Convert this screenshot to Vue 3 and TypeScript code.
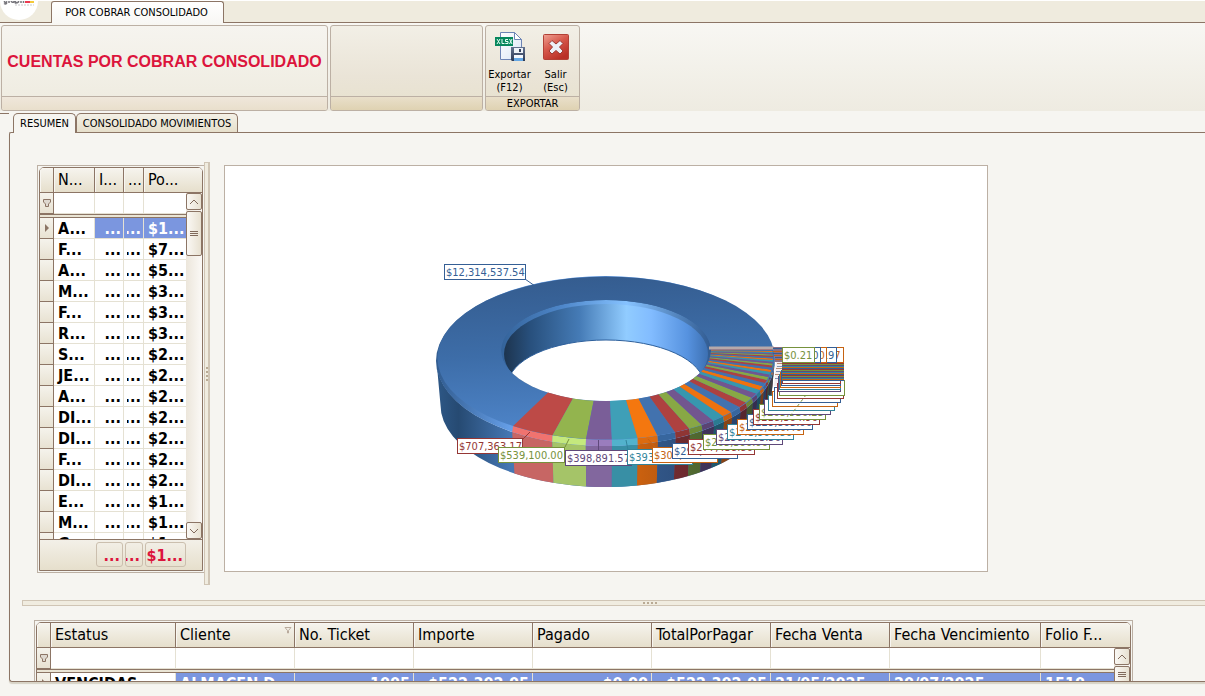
<script setup lang="ts">
import { ref } from 'vue'

interface Column { title: string; width: number; right?: boolean; filter?: boolean }
interface Slice { top: string; bevel: string; wall: string; tone: Tone }
interface Tone { top: string; bevel: string; wall: string; line: string }
interface Label { x: number; y: number; w: number; text: string; color: string }

const activeTab = ref('resumen')

const balanceColumns: Column[] = [
  { title: 'N...', width: 41 },
  { title: 'I...', width: 29, right: true },
  { title: '...', width: 20, right: true },
  { title: 'Po...', width: 43 },
]
const balanceRows: [string, string][] = [
  ['A...', '$1...'], ['F...', '$7...'], ['A...', '$5...'], ['M...', '$3...'],
  ['F...', '$3...'], ['R...', '$3...'], ['S...', '$2...'], ['JE...', '$2...'],
  ['A...', '$2...'], ['DI...', '$2...'], ['DI...', '$2...'], ['F...', '$2...'],
  ['DI...', '$2...'], ['E...', '$1...'], ['M...', '$1...'], ['G...', '$1...'],
]

const ticketColumns: Column[] = [
  { title: 'Estatus', width: 125 },
  { title: 'Cliente', width: 119, filter: true },
  { title: 'No. Ticket', width: 119, right: true },
  { title: 'Importe', width: 119, right: true },
  { title: 'Pagado', width: 119, right: true },
  { title: 'TotalPorPagar', width: 119, right: true },
  { title: 'Fecha Venta', width: 119 },
  { title: 'Fecha Vencimiento', width: 151 },
  { title: 'Folio F...', width: 75 },
]
const ticket = ['VENCIDAS', 'ALMACEN D...', '1005', '$522,302.05', '$0.00', '$522,302.05', '21/05/2025', '20/07/2025', '1510']

const tones: Tone[] = [
  { top: '#4272ae', bevel: '#37669e', wall: '#33598c', line: '#355f95' },
  { top: '#ae4140', bevel: '#8f3534', wall: '#7d2d2f', line: '#953735' },
  { top: '#88a845', bevel: '#6d8a37', wall: '#5f7a31', line: '#76923c' },
  { top: '#72568f', bevel: '#5a4373', wall: '#4d3a66', line: '#5f497a' },
  { top: '#3797ae', bevel: '#2b7b90', wall: '#256c80', line: '#31849b' },
  { top: '#ee720f', bevel: '#c75e0e', wall: '#b9560d', line: '#c66312' },
]
const frontTones: Tone[] = [
  { top: '#bd4a47', bevel: '#f0736f', wall: '#c76664', line: '#953735' },
  { top: '#93b44e', bevel: '#c4e97d', wall: '#a5c468', line: '#76923c' },
  { top: '#7a5e98', bevel: '#9a7dbd', wall: '#82679e', line: '#5f497a' },
  { top: '#3f9fb7', bevel: '#52b2cc', wall: '#388fa5', line: '#31849b' },
  { top: '#f4770f', bevel: '#dc6b10', wall: '#c9600f', line: '#c66312' },
]

const angles = [123.5, 108.4, 96.7, 87.8, 79, 71.9, 65.5, 60, 55, 50, 45.5, 41.5, 37.5, 34, 30.5, 27.5, 25,
  22.5, 20.2, 18.2, 16.4, 14.7, 13.1, 11.6, 10.2, 8.9, 7.7, 6.6, 5.5, 4.5, 3.6, 2.7, 1.9, 1.1, 0.4, -0.3, -1, -1.6, -2.2, -2.8]

function point(cx: number, cy: number, rx: number, ry: number, degrees: number): string {
  const t = (degrees * Math.PI) / 180
  return `${(cx + rx * Math.cos(t)).toFixed(1)} ${(cy + ry * Math.sin(t)).toFixed(1)}`
}
const rimAngle = (a: number) => a - 5 * Math.max(0, 1 - (a + 3) / 45)
const inner = (a: number) => point(606, 350.5, 105, 50.5, a)
const rim = (a: number) => point(605.5, 358, 167.5, 81.5, rimAngle(a))
const edge = (a: number) => point(605.5, 361, 169, 85, rimAngle(a))
const base = (a: number) => point(605.5, 405, 165, 82, rimAngle(a))

const slices: Slice[] = angles.slice(0, -1).map((a, i) => {
  const b = angles[i + 1]
  return {
    top: `M${inner(a)} L${rim(a)} A167.5 81.5 0 0 0 ${rim(b)} L${inner(b)} A105 50.5 0 0 1 ${inner(a)} Z`,
    bevel: `M${rim(a)} L${edge(a)} A169 85 0 0 0 ${edge(b)} L${rim(b)} A167.5 81.5 0 0 1 ${rim(a)} Z`,
    wall: `M${edge(a)} L${base(a)} A165 82 0 0 0 ${base(b)} L${edge(b)} A169 85 0 0 1 ${edge(a)} Z`,
    tone: i < 5 ? frontTones[i] : tones[(i + 1) % 6],
  }
})

const placed: [number, number, number, string][] = [
  [444, 264, 82, '$12,314,537.54'], [457, 438, 66, '$707,363.17'], [498, 447, 67, '$539,100.00'],
  [565, 450, 67, '$398,891.57'], [627, 449, 66, '$393,205.80'], [652, 447, 66, '$304,182.14'],
  [672, 443, 66, '$291,640.35'], [688, 439, 67, '$277,438.80'], [703, 434, 67, '$265,300.00'],
  [716, 429, 67, '$258,703.50'], [727, 424, 67, '$243,900.86'], [737, 419, 67, '$236,120.40'],
  [747, 414, 66, '$229,805.06'], [753, 409, 67, '$218,364.90'], [759, 404, 67, '$205,930.25'],
  [764, 399, 67, ''], [768, 395, 67, ''], [772, 391, 66, ''],
  [774, 387, 67, ''], [777, 383, 67, ''], [779, 380, 66, ''],
]
const labels: Label[] = placed.map(([x, y, w, text], i) => ({ x, y, w, text, color: tones[i % 6].line }))
for (let i = 0; i < 5; i++) {
  labels.push({ x: 778 + i, y: 376 - i * 2, w: 63 - i, text: '', color: tones[(i + 3) % 6].line })
}
for (let i = 0; i < 18; i++) {
  labels.push({ x: 782, y: 365 - i, w: 62, text: '', color: tones[i * 5 % 6].line })
}
const lastLabels: Label[] = [
  { x: 782, y: 347, w: 62, text: '$12,304.97', color: tones[5].line },
  { x: 782, y: 347, w: 55, text: '$1,803.19', color: tones[0].line },
  { x: 782, y: 347, w: 45, text: '$100.00', color: tones[5].line },
  { x: 782, y: 347, w: 39, text: '$10.00', color: tones[0].line },
  { x: 782, y: 347, w: 33, text: '$0.21', color: tones[2].line },
]
labels.push(...lastLabels)
</script>

<template>
  <div class="window">
    <header class="doc-bar">
      <svg class="logo" viewBox="0 0 40 22" role="img" aria-label="Logo">
        <circle cx="19" cy="0" r="19" fill="#fff" />
        <path d="M4.500 0v1q1 1 2 0v1.500q-1 1-2.500 0M9 0v2M11 0q1 2 3 1V0M15.500 0v2q2 0 3-1V0M21 0v2M23.500 0v2" fill="none" stroke="#77767c" stroke-width="1.500" />
        <path d="M25 0h5v2h-5z" fill="#ec3a50" /><path d="M30 0h4v2h-4z" fill="#f4c93a" />
        <path d="M15 4h19" stroke="#c9c9cc" stroke-dasharray="2 1" />
      </svg>
      <button class="doc-tab" type="button">POR COBRAR CONSOLIDADO</button>
    </header>

    <section class="ribbon">
      <div class="group group-title">
        <div class="group-body"><h1>CUENTAS POR COBRAR CONSOLIDADO</h1></div>
        <div class="group-caption"></div>
      </div>
      <div class="group group-blank tinted">
        <div class="group-body"></div>
        <div class="group-caption"></div>
      </div>
      <div class="group group-export tinted">
        <div class="group-body">
          <button class="tool" type="button">
            <svg viewBox="0 0 32 32" aria-hidden="true">
              <defs>
                <linearGradient id="paper" x2="1" y2="1"><stop stop-color="#fff" /><stop offset="1" stop-color="#dbe6f5" /></linearGradient>
                <linearGradient id="disk" y2="1" x2="0"><stop stop-color="#64738f" /><stop offset="1" stop-color="#2d3955" /></linearGradient>
              </defs>
              <path d="M6.500 1.500h14l7 7v20h-21z" fill="url(#paper)" stroke="#6d84b5" />
              <path d="M20.500 1.500v7h7z" fill="#fff" stroke="#6d84b5" />
              <path d="M1 6h18v9H1z" fill="#07875d" />
              <path d="M3 8l3 5M6 8l-3 5M8 8v4.500h2.500M14 8.500h-2.500v2H14v2h-2.700M15.500 8l2.500 5M18 8l-2.500 5" fill="none" stroke="#e5fff5" />
              <path d="M17 16h14v14H18l-1-1z" fill="url(#disk)" />
              <path d="M20 17h9v5h-9z" fill="#eef2f8" /><path d="M25 18h2v3h-2z" fill="#35415d" />
              <path d="M20 24h9v6h-9z" fill="#f4f8ff" /><path d="M20 27h9v3h-9z" fill="#66a8e5" />
            </svg>
            <span>Exportar<br />(F12)</span>
          </button>
          <button class="tool" type="button">
            <svg viewBox="0 0 32 32" aria-hidden="true">
              <defs><linearGradient id="close" x2="0.600" y2="1"><stop stop-color="#f0a293" /><stop offset="0.500" stop-color="#d6584b" /><stop offset="1" stop-color="#b92f26" /></linearGradient></defs>
              <rect x="3.500" y="3.500" width="25" height="25" rx="1" fill="url(#close)" stroke="#b24136" />
              <path d="M12 9.500l4 3.500 4-3.500 3 3-3.500 3.500 3.500 4-3 3-4-3.500-4 3.500-3-3 3.500-4-3.500-3.500z" fill="#edf0f7" stroke="#9b3731" stroke-linejoin="round" />
            </svg>
            <span>Salir<br />(Esc)</span>
          </button>
        </div>
        <div class="group-caption">EXPORTAR</div>
      </div>
    </section>

    <nav class="tabs" role="tablist">
      <button type="button" role="tab" :class="['tab', { active: activeTab === 'resumen' }]" @click="activeTab = 'resumen'">RESUMEN</button>
      <button type="button" role="tab" :class="['tab', { active: activeTab === 'movimientos' }]" @click="activeTab = 'movimientos'">CONSOLIDADO MOVIMIENTOS</button>
    </nav>

    <main class="panel">
      <div class="upper">
        <section class="grid-frame balance">
          <div class="grid">
            <div class="grid-main">
              <div class="table-clip">
                <table>
                  <colgroup><col class="mark-col" /><col v-for="(c, i) in balanceColumns" :key="i" :style="{ width: c.width + 'px' }" /></colgroup>
                  <thead>
                    <tr class="head"><th></th><th v-for="(c, i) in balanceColumns" :key="i">{{ c.title }}</th></tr>
                    <tr class="filter">
                      <td class="mark"><svg viewBox="0 0 8 8" aria-hidden="true"><path d="M.5.5h7v2.500L5.500 5v2.500h-3V5l-2-2z" /></svg></td>
                      <td v-for="(c, i) in balanceColumns" :key="i"><input type="text" :aria-label="'Filtro ' + c.title" /></td>
                    </tr>
                    <tr class="divider"><td :colspan="balanceColumns.length + 1"></td></tr>
                  </thead>
                  <tbody>
                    <tr v-for="(r, i) in balanceRows" :key="i" :class="{ selected: i === 0 }">
                      <td class="mark"><svg v-if="i === 0" class="arrow" viewBox="0 0 8 8" aria-hidden="true"><path d="M2 0l4 4-4 4z" /></svg></td>
                      <td class="first">{{ r[0] }}</td>
                      <td class="number"><span class="end">...</span></td>
                      <td class="number"><span class="end">...</span></td>
                      <td>{{ r[1] }}</td>
                    </tr>
                  </tbody>
                </table>
              </div>
              <div class="scroll">
                <div class="corner"></div>
                <button type="button" class="step" aria-label="Subir"><svg viewBox="0 0 8 8"><path d="M0 6l4-4 4 4" /></svg></button>
                <button type="button" class="thumb" aria-label="Desplazar"><svg viewBox="0 0 8 8"><path d="M0 1.500h8M0 3.500h8M0 5.500h8" /></svg></button>
                <div class="track"></div>
                <button type="button" class="step" aria-label="Bajar"><svg viewBox="0 0 8 8"><path d="M0 2l4 4 4-4" /></svg></button>
              </div>
            </div>
            <footer class="totals">
              <output class="t-one">...</output><output class="t-two">...</output><output class="t-three">$1...</output>
            </footer>
          </div>
        </section>
        <div class="splitter-v"><i v-for="n in 4" :key="n"></i></div>
        <figure class="chart">
          <svg viewBox="225 166 762 405" role="img" aria-label="Saldos por cliente">
            <defs>
              <linearGradient id="ring" x2="0.100" y2="1"><stop stop-color="#345b8d" /><stop offset="0.500" stop-color="#3d6da8" /><stop offset="1" stop-color="#4f86cb" /></linearGradient>
              <linearGradient id="side" gradientUnits="userSpaceOnUse" x1="436" y1="0" x2="511" y2="0"><stop stop-color="#2e5887" /><stop offset="0.300" stop-color="#264a72" /><stop offset="1" stop-color="#4677b4" /></linearGradient>
              <linearGradient id="rim" gradientUnits="userSpaceOnUse" x1="436" y1="0" x2="511" y2="0"><stop stop-color="#315c90" /><stop offset="1" stop-color="#669fe8" /></linearGradient>
              <linearGradient id="hole"><stop stop-color="#1d344e" /><stop offset="0.130" stop-color="#28507d" /><stop offset="0.370" stop-color="#457bb6" /><stop offset="0.600" stop-color="#91ccff" /><stop offset="0.720" stop-color="#82bcff" /><stop offset="0.900" stop-color="#5692df" /><stop offset="1" stop-color="#3d70b2" /></linearGradient>
              <linearGradient id="lip"><stop stop-color="#34639a" /><stop offset="0.300" stop-color="#4f88cb" /><stop offset="0.600" stop-color="#86c2ff" /><stop offset="1" stop-color="#315b91" /></linearGradient>
              <linearGradient id="dusk" gradientUnits="userSpaceOnUse" x1="640" y1="0" x2="775" y2="0"><stop stop-color="#10182a" stop-opacity="0" /><stop offset="1" stop-color="#10182a" stop-opacity="0.450" /></linearGradient>
              <clipPath id="opening"><ellipse cx="606" cy="350.500" rx="105" ry="50.500" /></clipPath>
            </defs>
            <path d="M436.500 361A169 85 0 0 0 774.500 361L770.500 405A165 82 0 0 1 440.500 405Z" fill="url(#side)" />
            <path v-for="(s, i) in slices" :key="'w' + i" :d="s.wall" :fill="s.tone.wall" />
            <path d="M640 443A169 85 0 0 0 774.500 361L770.500 405A165 82 0 0 1 640 485.500Z" fill="url(#dusk)" />
            <ellipse cx="605.500" cy="361" rx="169.500" ry="85" fill="url(#rim)" />
            <path v-for="(s, i) in slices" :key="'b' + i" :d="s.bevel" :fill="s.tone.bevel" />
            <ellipse cx="606" cy="358" rx="168.500" ry="81.500" fill="url(#ring)" />
            <g clip-path="url(#opening)">
              <ellipse cx="606" cy="350.500" rx="105" ry="50.500" fill="url(#lip)" />
              <ellipse cx="606" cy="354" rx="102" ry="50" fill="url(#hole)" />
              <ellipse cx="606" cy="385" rx="98" ry="45" fill="#fff" stroke="#2d5f9b" />
            </g>
            <path v-for="(s, i) in slices" :key="'t' + i" :d="s.top" :fill="s.tone.top" />
            <path d="M709 348h65" stroke="#b7a9aa" stroke-width="3" />
            <path d="M525 279l10 7" stroke="#355f95" />
            <path d="M523 439l7-7" stroke="#953735" /><path d="M565 447l4-8" stroke="#76923c" /><path d="M598.500 450v-10" stroke="#5f497a" /><path d="M628 450l-2-10" stroke="#31849b" /><path d="M655 447l-7-8" stroke="#c66312" />
            <path d="M773 347h10v15h-8z" fill="#8a6f86" />
            <path d="M773 351.500h10M774 355.500h9M775 359.500h8" stroke="#c66312" /><path d="M773 348.500h10M773 353.500h10M775 357.500h8" stroke="#355f95" />
            <path d="M776 362h6v14l-4 10h-4z" fill="#f3eef0" />
            <path d="M777 363.500h5M776 368.500h6M775 374.500h6" stroke="#b98b73" /><path d="M777 366.500h5M776 371.500h5M775 378.500h4" stroke="#7f95b5" />
            <g v-for="(l, i) in labels" :key="'l' + i">
              <rect :x="l.x + 0.5" :y="l.y + 0.5" :width="l.w - 1" height="15" fill="#fff" :stroke="l.color" />
              <text v-if="l.text" :x="l.x + 2" :y="l.y + 12" :fill="l.color">{{ l.text }}</text>
            </g>
            <path d="M790 416l16-21" stroke="#76923c" stroke-dasharray="3 3" />
          </svg>
        </figure>
      </div>

      <div class="splitter-h"><i v-for="n in 4" :key="n"></i></div>

      <section class="grid-frame tickets">
        <div class="grid">
          <div class="grid-main">
            <div class="table-clip">
              <table>
                <colgroup><col class="mark-col" /><col v-for="(c, i) in ticketColumns" :key="i" :style="{ width: c.width + 'px' }" /></colgroup>
                <thead>
                  <tr class="head">
                    <th></th>
                    <th v-for="(c, i) in ticketColumns" :key="i">
                      <div class="th">{{ c.title }}<svg v-if="c.filter" viewBox="0 0 8 8" aria-hidden="true"><path d="M1 1.500h6L4.500 4.500V7h-1V4.500z" /></svg></div>
                    </th>
                  </tr>
                  <tr class="filter">
                    <td class="mark"><svg viewBox="0 0 8 8" aria-hidden="true"><path d="M.5.5h7v2.500L5.500 5v2.500h-3V5l-2-2z" /></svg></td>
                    <td v-for="(c, i) in ticketColumns" :key="i"><input type="text" :aria-label="'Filtro ' + c.title" /></td>
                  </tr>
                  <tr class="divider"><td :colspan="ticketColumns.length + 1"></td></tr>
                </thead>
                <tbody>
                  <tr class="selected">
                    <td class="mark"><svg class="arrow" viewBox="0 0 8 8" aria-hidden="true"><path d="M2 0l4 4-4 4z" /></svg></td>
                    <td v-for="(v, i) in ticket" :key="i" :class="{ first: i === 0 }"><span :class="{ end: ticketColumns[i].right }">{{ v }}</span></td>
                  </tr>
                </tbody>
              </table>
            </div>
            <div class="scroll">
              <div class="corner"></div>
              <button type="button" class="step" aria-label="Subir"><svg viewBox="0 0 8 8"><path d="M0 6l4-4 4 4" /></svg></button>
              <button type="button" class="thumb short" aria-label="Desplazar"><svg viewBox="0 0 8 8"><path d="M0 1.500h8M0 3.500h8M0 5.500h8" /></svg></button>
              <div class="track"></div>
            </div>
          </div>
        </div>
      </section>
    </main>
  </div>
</template>

<style>
html, body, #app { height: 100%; }
body { margin: 0; background: #f6f5f1; overflow: hidden; }
</style>

<style scoped>
* { box-sizing: border-box; }
.window {
  --line: #8c7565;
  --soft: #bcb0a4;
  --cell: #e5e1d3;
  display: flex; flex-direction: column; height: 100%; background: #f6f5f1; color: #000;
  font: 11px/13px "DejaVu Sans Condensed", Tahoma, "Noto Sans", sans-serif;
}
button { font: inherit; color: inherit; padding: 0; margin: 0; }
.doc-bar { flex: none; display: flex; align-items: flex-end; height: 23px; border-top: 1px solid #fff; border-bottom: 1px solid var(--line); background: #efebde; }
.logo { width: 40px; height: 22px; margin-right: 11px; align-self: flex-start; flex: none; }
.doc-tab { height: 22px; width: 173px; margin-bottom: -1px; padding-right: 2px; border: 1px solid var(--line); border-bottom: 0; border-radius: 3px 3px 0 0; background: linear-gradient(#fff, #f8f7f4); white-space: nowrap; }
.ribbon { flex: none; display: flex; gap: 2px; height: 88px; padding: 2px 1px 0; background: linear-gradient(#f8f7f3, #eeebe1); }
.group { display: flex; flex-direction: column; border: 1px solid var(--soft); border-radius: 3px; background: linear-gradient(#f6f4ef, #eeebdf); overflow: hidden; }
.group.tinted { background: linear-gradient(#f2efe6, #eae4d7 60%, #e7e1cd); }
.group-title { width: 327px; }
.group-blank { width: 153px; }
.group-export { width: 95px; }
.group-body { flex: 1; display: flex; align-items: center; justify-content: center; padding-top: 2px; }
.group-caption { height: 14px; border-top: 1px solid var(--soft); background: linear-gradient(#efe7db, #e9dfcc); text-align: center; line-height: 13px; }
.tinted .group-caption { background: linear-gradient(#e9dfca, #dfd2b2); }
h1 { margin: 0; font: bold 16px/20px "Liberation Sans", Arial, sans-serif; color: #dc143c; white-space: nowrap; }
.tool { width: 46px; display: flex; flex-direction: column; align-items: center; gap: 5px; border: 0; background: none; }
.tool svg { width: 32px; height: 32px; }
.tabs { flex: none; display: flex; height: 21px; margin-top: 2px; }
.tabs::before { content: ""; width: 9px; height: 1px; margin-right: 4px; background: var(--line); }
.tab { height: 19px; padding: 0 6px; border: 1px solid var(--line); border-bottom: 0; border-radius: 5px 5px 0 0; background: linear-gradient(#f3f0e6, #e6dfcb); white-space: nowrap; }
.tab.active { height: 20px; background: #f6f5f1; z-index: 1; }
.panel { flex: 1; min-height: 0; margin: -2px 0 14px 9px; padding: 29px 0 0; border: 1px solid var(--line); border-right: 0; border-radius: 2px 0 0 3px; box-shadow: 0 2px 1px #d8d3c6; overflow: hidden; display: flex; flex-direction: column; }
.upper { flex: none; display: flex; align-items: flex-start; padding-left: 27px; }
.grid-frame { border: 1px solid var(--soft); padding: 1px; }
.balance { flex: none; width: 168px; height: 408px; margin: 3px -1px 0 0; }
.grid { height: 100%; display: flex; flex-direction: column; border: 1px solid var(--line); border-radius: 5px 5px 0 0; overflow: hidden; background: #fff; }
.grid-main { flex: 1; min-height: 0; display: flex; }
.table-clip { flex: 1; min-width: 0; overflow: hidden; }
table { width: 100%; table-layout: fixed; border-collapse: separate; border-spacing: 0; font-size: 16px; line-height: 20px; }
.mark-col { width: 14px; }
th, td { padding: 0; overflow: hidden; white-space: nowrap; }
th { height: 25px; padding-left: 4px; border-right: 1px solid var(--line); border-bottom: 1px solid var(--line); background: linear-gradient(#f6f4ee, #e6dfcc); text-align: left; font-weight: normal; box-shadow: inset 1px 1px #f8f6f1; }
.th { display: flex; justify-content: space-between; }
.th svg { width: 8px; height: 8px; margin: 1px 2px 0; fill: none; stroke: #b9aa9c; }
td { height: 21px; padding: 2px 3px 0 4px; line-height: 18px; border-right: 1px solid var(--cell); border-bottom: 1px solid var(--cell); font-weight: bold; background: #fff; }
td.number { padding-left: 3px; padding-right: 2px; }
td.mark { padding: 0; border-color: var(--line); background: linear-gradient(#f5f3ec, #e8e2d2); text-align: center; }
.mark svg { display: block; width: 8px; height: 8px; margin: auto; fill: #ded8cf; stroke: var(--line); }
.mark svg.arrow { fill: var(--line); stroke: none; }
.filter td { padding: 0; }
.filter input { display: block; width: 100%; height: 20px; padding: 0 3px; border: 0; outline: 0; background: transparent; font: inherit; }
.divider td { height: 4px; padding: 0; border: solid var(--line); border-width: 1px 0; background: #eae5d5; }
.selected td:not(.mark):not(.first) { background: #7b96df; color: #fff; }
.end { display: flex; justify-content: flex-end; overflow: hidden; }
.scroll { flex: none; width: 16px; display: flex; flex-direction: column; background: linear-gradient(90deg, #ece6db, #fbf9f6); }
.corner { flex: none; height: 25px; border-bottom: 1px solid var(--line); background: linear-gradient(#f6f4ee, #e6dfcc); }
.step, .thumb { flex: none; display: flex; align-items: center; justify-content: center; height: 17px; border: 1px solid var(--line); border-radius: 2px; background: linear-gradient(90deg, #faf8f4, #e8e1d1); }
.step svg, .thumb svg { width: 8px; height: 8px; fill: none; stroke: #806a5b; }
.thumb { height: 45px; margin-top: 1px; }
.thumb.short { height: 17px; }
.track { flex: 1; }
.totals { flex: none; height: 31px; display: flex; justify-content: flex-end; gap: 2px; padding: 2px 16px 3px; border-top: 1px solid var(--line); background: linear-gradient(#f3f0e8, #e6dfcc); font-size: 16px; font-weight: bold; line-height: 25px; color: #dc143c; }
.totals output { display: flex; justify-content: flex-end; padding: 0 2px; border: 1px solid #cbbfae; border-radius: 3px; overflow: hidden; }
.t-one { width: 27px; }
.t-two { width: 18px; }
.t-three { width: 41px; }
.splitter-v { flex: none; width: 6px; height: 423px; border: solid #d0c5b5; border-width: 1px 2px 1px 1px; background: #f0ece0; display: flex; flex-direction: column; align-items: center; justify-content: center; gap: 2px; z-index: 1; }
.splitter-v i, .splitter-h i { width: 2px; height: 2px; background: #b9aa94; }
.chart { flex: 0 1 764px; min-width: 0; margin: 3px 16px 0 14px; border: 1px solid var(--soft); background: #fff; }
.chart svg { display: block; width: 100%; font: 11px "DejaVu Sans Condensed", Tahoma, sans-serif; }
.splitter-h { flex: none; height: 6px; margin: 15px -72px 14px 12px; border: solid #d0c5b5; border-width: 1px 0 1px 1px; background: #f0ece0; display: flex; align-items: center; gap: 2px; justify-content: center; }
.tickets { flex: none; height: 100px; max-width: 1099px; width: calc(100% - 72px); margin-left: 24px; }
</style>
